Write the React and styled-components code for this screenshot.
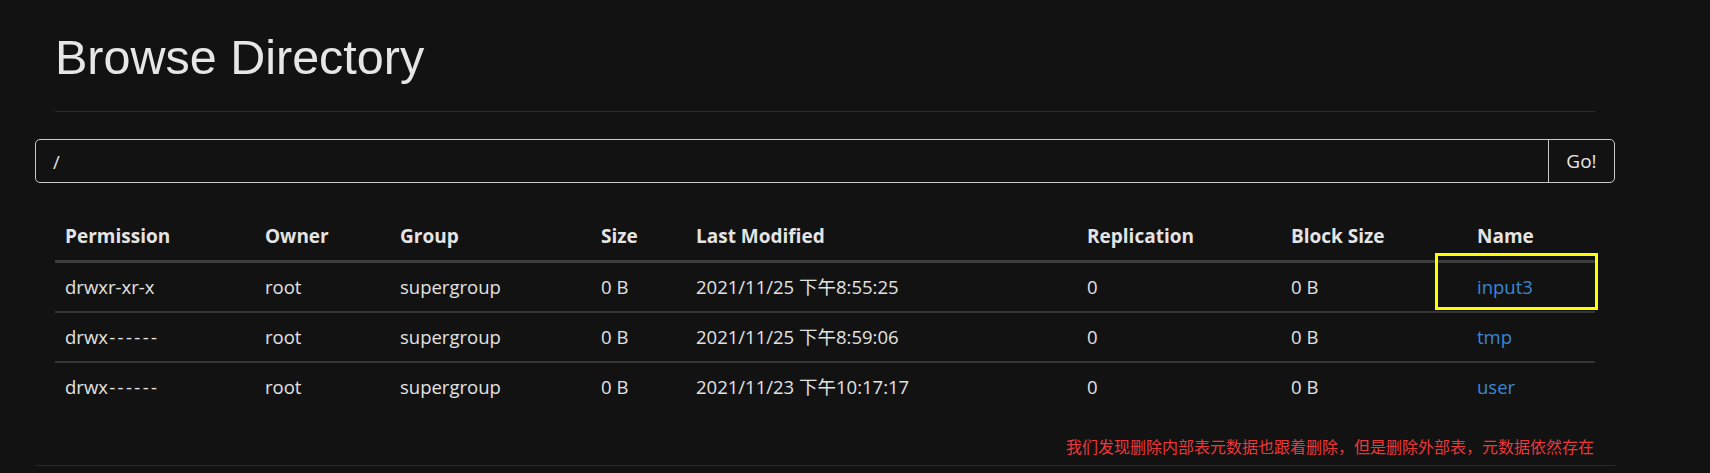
import React from 'react';
import styled, { createGlobalStyle } from 'styled-components';

const GlobalStyle = createGlobalStyle`
    html, body {
        margin: 0;
        padding: 0;
        background-color: #121212;
    }
    body {
        font-family: "Open Sans", "Noto Sans CJK SC", sans-serif;
        color: #e4e4e4;
    }
`;

const columns = [
    { key: 'permission', label: 'Permission', width: 200 },
    { key: 'owner', label: 'Owner', width: 135 },
    { key: 'group', label: 'Group', width: 201 },
    { key: 'size', label: 'Size', width: 95 },
    { key: 'modified', label: 'Last Modified', width: 391 },
    { key: 'replication', label: 'Replication', width: 204 },
    { key: 'blockSize', label: 'Block Size', width: 186 },
    { key: 'name', label: 'Name', width: 128 },
];

const files = [
    { permission: 'drwxr-xr-x', owner: 'root', group: 'supergroup', size: '0 B', modified: '2021/11/25 下午8:55:25', replication: '0', blockSize: '0 B', name: 'input3', marked: true },
    { permission: 'drwx------', owner: 'root', group: 'supergroup', size: '0 B', modified: '2021/11/25 下午8:59:06', replication: '0', blockSize: '0 B', name: 'tmp' },
    { permission: 'drwx------', owner: 'root', group: 'supergroup', size: '0 B', modified: '2021/11/23 下午10:17:17', replication: '0', blockSize: '0 B', name: 'user' },
];

// runs of dashes are drawn a bit wider, as in the original font
function Permission({ value }) {
    const chars = value.split('');
    return chars.map((ch, i) => {
        const inRun = ch === '-' && (chars[i - 1] === '-' || chars[i + 1] === '-');
        return inRun ? <Dash key={i}>-</Dash> : ch;
    });
}

function App() {
    return (
        <>
            <GlobalStyle />
            <Container>
                <Header>
                    <h1>Browse Directory</h1>
                </Header>
                <PathForm onSubmit={(e) => e.preventDefault()}>
                    <input type="text" defaultValue="/" />
                    <button type="submit">Go!</button>
                </PathForm>
                <TableWrap>
                    <FileTable>
                        <colgroup>
                            {columns.map((c) => (
                                <col key={c.key} style={{ width: c.width }} />
                            ))}
                        </colgroup>
                        <thead>
                            <tr>
                                {columns.map((c) => (
                                    <th key={c.key}>{c.label}</th>
                                ))}
                            </tr>
                        </thead>
                        <tbody>
                            {files.map((f) => (
                                <tr key={f.name}>
                                    <td><Permission value={f.permission} /></td>
                                    <td>{f.owner}</td>
                                    <td>{f.group}</td>
                                    <td>{f.size}</td>
                                    <td>{f.modified}</td>
                                    <td>{f.replication}</td>
                                    <td>{f.blockSize}</td>
                                    <NameCell>
                                        <a href="#">{f.name}</a>
                                        {f.marked && <Highlight />}
                                    </NameCell>
                                </tr>
                            ))}
                        </tbody>
                    </FileTable>
                </TableWrap>
                <Note>我们发现删除内部表元数据也跟着删除，但是删除外部表，元数据依然存在</Note>
                <BottomRule />
            </Container>
        </>
    );
}

const Container = styled.div`
    width: 1580px;
    margin-left: 35px;
`;

const Header = styled.div`
    margin: 0 20px;
    border-bottom: 1px solid #2c2c2c;
    padding: 33px 0 30px 0;
    h1{
        margin: 0;
        font-family: "Liberation Sans", Arial, sans-serif;
        font-size: 48.5px;
        font-weight: 400;
        line-height: 48px;
        color: #e6e6e6;
    }
`;

const PathForm = styled.form`
    display: flex;
    height: 44px;
    margin-top: 27px;
    border: 1px solid #c9c9c9;
    border-radius: 5px;
    box-sizing: border-box;
    input{
        flex: 1;
        min-width: 0;
        padding: 0 17px;
        background: transparent;
        border: none;
        outline: none;
        color: #e4e4e4;
        font-family: "Open Sans", sans-serif;
        font-size: 18.5px;
    }
    button{
        width: 66px;
        background: transparent;
        border: none;
        border-left: 1px solid #c9c9c9;
        color: #e8e8e8;
        font-family: "Open Sans", sans-serif;
        font-size: 19px;
        padding: 0;
        cursor: pointer;
    }
`;

const TableWrap = styled.div`
    margin: 29px 20px 0 20px;
`;

const FileTable = styled.table`
    width: 1540px;
    table-layout: fixed;
    border-collapse: collapse;
    font-size: 18.5px;
    line-height: 28px;
    th{
        text-align: left;
        font-size: 19px;
        font-weight: 700;
        color: #e4e4e4;
        padding: 10px;
        border-bottom: 3px solid #3c3c3c;
        white-space: nowrap;
    }
    td{
        padding: 10px;
        white-space: nowrap;
        color: #e2e2e2;
    }
    tbody tr + tr td{
        border-top: 2px solid #363636;
    }
`;

const Dash = styled.span`
    display: inline-block;
    width: 8.4px;
    text-align: center;
`;

const NameCell = styled.td`
    position: relative;
    a{
        color: #3a86d4;
        text-decoration: none;
    }
`;

const Highlight = styled.span`
    position: absolute;
    left: -32px;
    top: -10px;
    width: 163px;
    height: 57px;
    border: 3px solid #ffff00;
    box-sizing: border-box;
    pointer-events: none;
`;

const Note = styled.div`
    margin-top: 23px;
    padding-right: 21px;
    text-align: right;
    font-family: "Noto Sans CJK SC", sans-serif;
    font-size: 16px;
    line-height: 24px;
    color: #e8383b;
`;

const BottomRule = styled.div`
    margin-top: 7px;
    border-top: 1px solid #2a2a2a;
`;

export default App;
